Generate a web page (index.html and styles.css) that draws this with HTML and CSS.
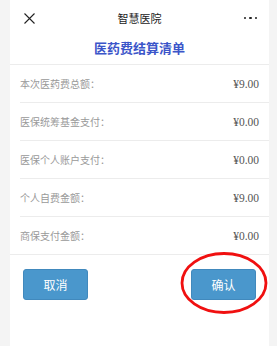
FILE: index.html
```html
<!DOCTYPE html>
<html lang="zh-CN">
<head>
    <meta charset="UTF-8">
    <meta name="viewport" content="width=device-width, initial-scale=1.0">
    <title>智慧医院</title>
    <link rel="stylesheet" href="styles.css">
</head>
<body>
    <div class="page">
        <div class="topbar">
            <span class="close">
                <svg width="11" height="11" viewBox="0 0 11 11"><path d="M0.5 0.5 L10.5 10.5 M10.5 0.5 L0.5 10.5" stroke="#222" stroke-width="1.1" fill="none"/></svg>
            </span>
            <span class="topbar-title">智慧医院</span>
            <span class="more"><i></i><i></i><i></i></span>
        </div>
        <h2 class="bill-title">医药费结算清单</h2>

        <ul class="bill-list">
            <li><span class="label">本次医药费总额：</span><span class="value">¥9.00</span></li>
            <li><span class="label">医保统筹基金支付：</span><span class="value">¥0.00</span></li>
            <li><span class="label">医保个人账户支付：</span><span class="value">¥0.00</span></li>
            <li><span class="label">个人自费金额：</span><span class="value">¥9.00</span></li>
            <li><span class="label">商保支付金额：</span><span class="value">¥0.00</span></li>
        </ul>

        <div class="actions">
            <button class="btn">取消</button>
            <div class="confirm-wrap">
                <button class="btn">确认</button>
                <svg class="circle-mark" width="88" height="64" viewBox="0 0 88 64"><ellipse cx="44" cy="32" rx="42" ry="29.5" stroke="#f01010" stroke-width="2.8" fill="none"/></svg>
            </div>
        </div>
    </div>
</body>
</html>
```

FILE: styles.css
```css
body {
    margin: 0;
    padding: 0;
    background-color: #f4f4f4;
    font-family: "Noto Sans CJK SC", "Noto Sans", sans-serif;
}

.page {
    margin: 0 8px 0 10px;
    min-height: 346px;
    background: #fff;
}

.topbar {
    height: 36px;
    display: flex;
    align-items: center;
    justify-content: space-between;
    padding: 0 12px 0 14px;
}

.close {
    display: flex;
    width: 11px;
}

.topbar-title {
    font-size: 11px;
    color: #222;
}

.more {
    display: flex;
    gap: 3px;
    width: 13px;
}

.more i {
    width: 2.5px;
    height: 2.5px;
    border-radius: 50%;
    background: #222;
}

.bill-title {
    margin: 0;
    height: 28px;
    line-height: 23px;
    text-align: center;
    font-size: 13px;
    font-weight: bold;
    color: #3b55c9;
    border-bottom: 1px solid #ececec;
}

.bill-list {
    list-style: none;
    margin: 0;
    padding: 0 0 0 10px;
    border-bottom: 1px solid #ececec;
}

.bill-list li {
    height: 37px;
    display: flex;
    align-items: center;
    justify-content: space-between;
    padding-right: 10px;
    border-bottom: 1px solid #ececec;
}

.bill-list li:last-child {
    border-bottom: none;
}

.label {
    font-size: 10px;
    color: #999;
}

.value {
    font-family: "Liberation Serif", serif;
    font-size: 11.5px;
    color: #555;
}

.actions {
    display: flex;
    justify-content: space-between;
    padding: 14px 13px 0 13px;
}

.confirm-wrap {
    position: relative;
}

.btn {
    width: 65px;
    height: 31px;
    background-color: #4a97cc;
    border: 1px solid #4189bd;
    border-radius: 3px;
    color: #fff;
    font-family: "Noto Sans CJK SC", sans-serif;
    font-size: 12px;
    padding: 0;
}

.circle-mark {
    position: absolute;
    left: -11px;
    top: -18px;
}
```
